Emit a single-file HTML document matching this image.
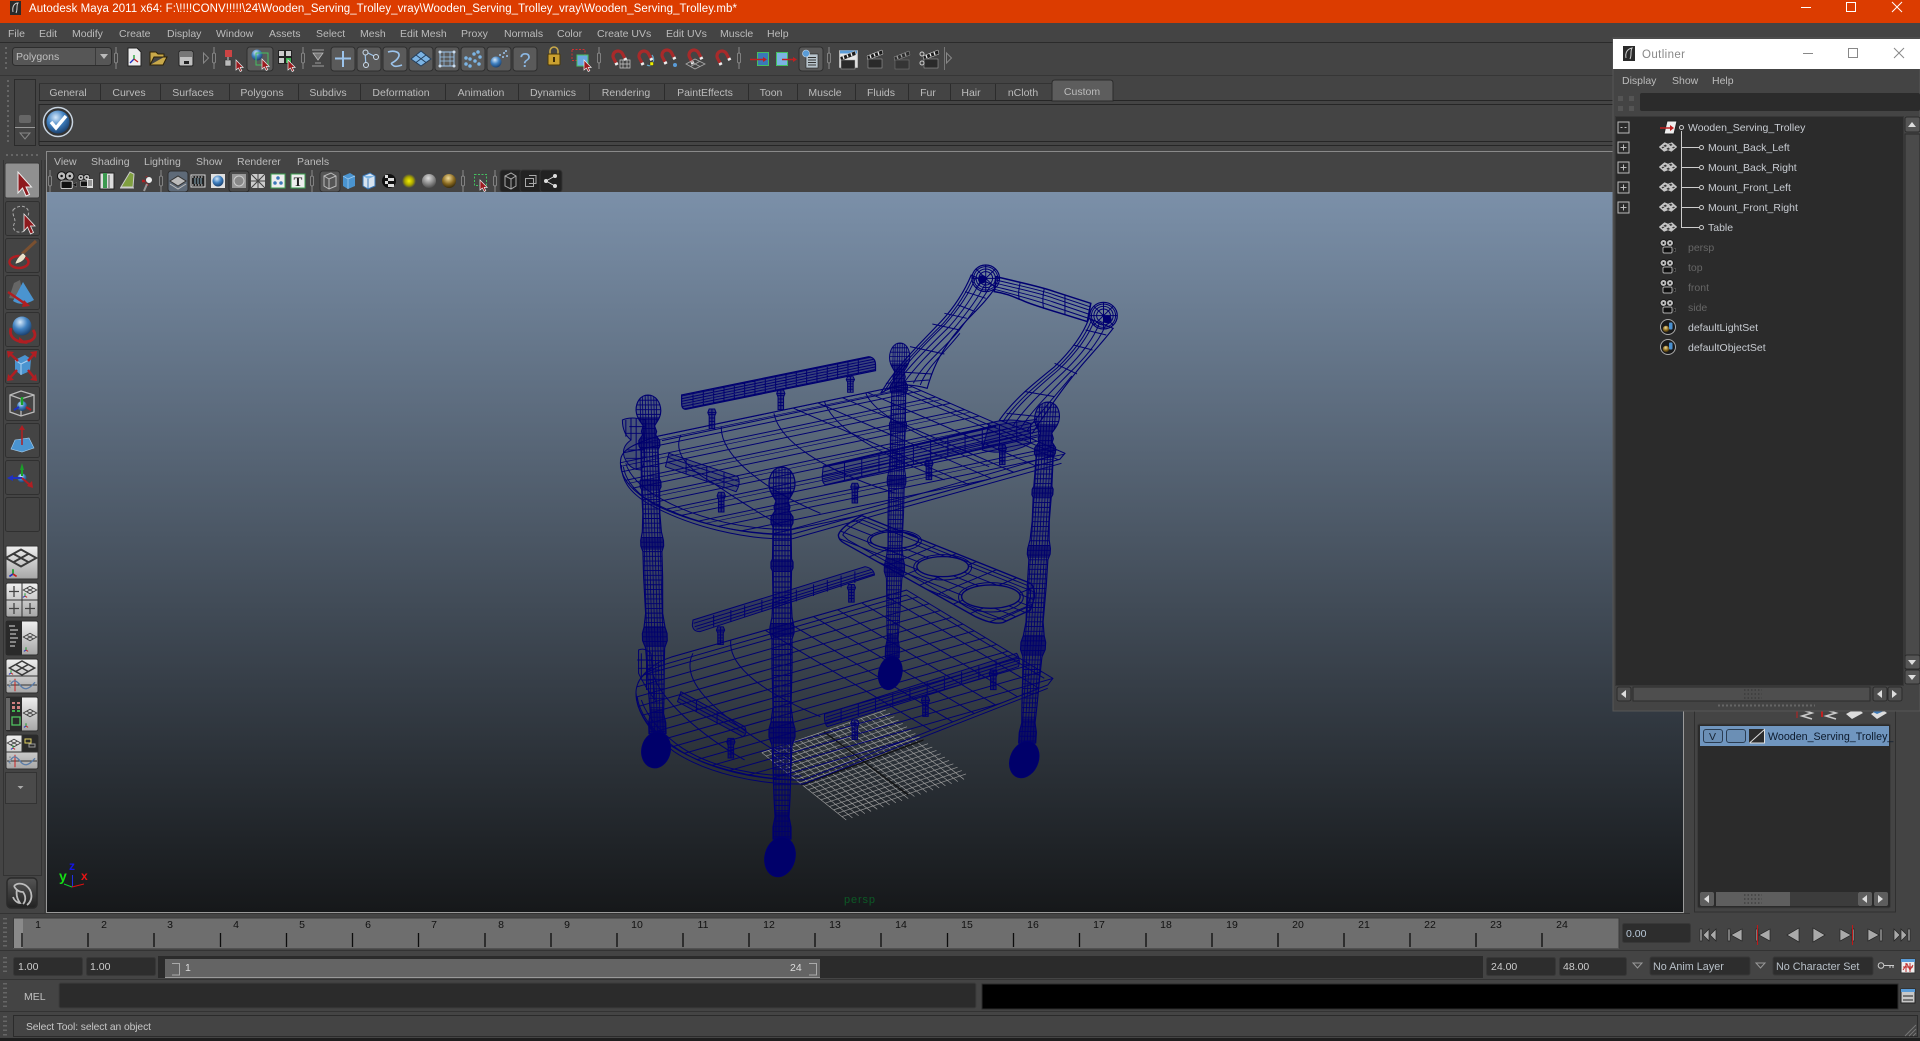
<!DOCTYPE html>
<html><head><meta charset="utf-8"><title>Autodesk Maya 2011</title>
<style>
html,body{margin:0;padding:0;background:#444;overflow:hidden}
svg{display:block}
text{font-family:"Liberation Sans",sans-serif;font-size:10.5px;fill:#bcbcbc}
</style></head><body>
<svg xmlns="http://www.w3.org/2000/svg" width="1920" height="1041" viewBox="0 0 1920 1041">
<defs>
<linearGradient id="vp" x1="0" y1="0" x2="0" y2="1"><stop offset="0" stop-color="#7b90a9"/><stop offset="1" stop-color="#16181a"/></linearGradient>
<linearGradient id="lt" x1="0" y1="0" x2="0" y2="1"><stop offset="0" stop-color="#efefef"/><stop offset="1" stop-color="#a6a6a6"/></linearGradient>
<linearGradient id="dk" x1="0" y1="0" x2="0" y2="1"><stop offset="0" stop-color="#555"/><stop offset="1" stop-color="#222"/></linearGradient>
<radialGradient id="gb" cx=".4" cy=".3" r=".75"><stop offset="0" stop-color="#d5e8fa"/><stop offset=".5" stop-color="#3f80c0"/><stop offset="1" stop-color="#173a66"/></radialGradient>
<radialGradient id="gy" cx=".5" cy=".5" r=".5"><stop offset="0" stop-color="#f4f000"/><stop offset=".6" stop-color="#a8a400"/><stop offset="1" stop-color="#444"/></radialGradient>
<radialGradient id="gg" cx=".45" cy=".3" r=".75"><stop offset="0" stop-color="#ddd"/><stop offset="1" stop-color="#444"/></radialGradient>
<radialGradient id="go" cx=".45" cy=".3" r=".75"><stop offset="0" stop-color="#f2dc9a"/><stop offset=".55" stop-color="#8a6a20"/><stop offset="1" stop-color="#2a2008"/></radialGradient>
<g id="h"><path d="M0-11V11" stroke="#8a8a8a"/><rect x="-1.5" y="-5" width="3" height="10" rx="1.5" fill="#444" stroke="#9a9a9a" stroke-width=".7"/></g>
<rect id="b" x="-12" y="-12" width="24" height="24" rx="3" fill="#5a5a5a" stroke="#2e2e2e"/>
<rect id="bd" x="-11" y="-11" width="22" height="22" rx="3" fill="#222" stroke="#333"/>
<path id="cur" d="M0 0V10L2.4 8 4.2 11.5 5.8 10.7 4.2 7.4H7.2Z" fill="#9c1a1e" stroke="#eee" stroke-width=".7"/>
<g id="mag"><path d="M-5 5V0A5 5 0 0 1 5 0V5" transform="rotate(-28)" fill="none" stroke="#a82a2a" stroke-width="3.200"/><path d="M-5 5V7.500M5 5V7.500" transform="rotate(-28)" stroke="#eee" stroke-width="3.200"/></g>
<g id="cam"><circle cx="-3.5" cy="-4" r="3.4" fill="#bbb" stroke="#111" stroke-width=".8"/><circle cx="3" cy="-4" r="3.4" fill="#bbb" stroke="#111" stroke-width=".8"/><circle cx="-3.5" cy="-4" r="1" fill="#111"/><circle cx="3" cy="-4" r="1" fill="#111"/><rect x="-4" y="0" width="9" height="6" rx="1" fill="#111" stroke="#ddd" stroke-width=".7"/><path d="M5 3l3.5-1.8v3.6z" fill="#111" stroke="#888" stroke-width=".4"/></g>
<g id="clap"><path d="M-8-1L7-7 8-3-7 3z" fill="#1c1c1c" stroke="#ddd" stroke-width=".5"/><path d="M-5-2l1 3M-1-3.600l1 3M3-5l1 3" stroke="#eee" stroke-width="1.300"/><rect x="-7" y="2" width="14" height="9" fill="#2a2a2a" stroke="#aaa" stroke-width=".5"/></g>
<g id="pl"><path d="M-9 0L0-5 9 0 0 5ZM-4.500-2.500L4.500 2.500M4.500-2.500L-4.500 2.500" fill="none" stroke="#3a3a3a" stroke-width="1.100"/></g>
<g id="ax"><path d="M0 0V-4" stroke="#1a9a2a" stroke-width="1.400"/><path d="M0 0L-3 2" stroke="#2030c0" stroke-width="1.400"/><path d="M0 0L3 2" stroke="#c02020" stroke-width="1.400"/></g>
<g id="wv"><path d="M-15 0H15" stroke="#333"/><path d="M-7-7V7" stroke="#c22"/><path d="M-13 2C-9-7-6-6-2 0S6 6 13-3" fill="none" stroke="#5a7ca8" stroke-width="1.400"/><path d="M-12-5V5" stroke="#999" stroke-width="2" stroke-dasharray="1.500 2"/></g>
<g id="msh"><path d="M-9.500 0L-3.500-5 0-3.500 4-5 9.500 0 3.500 5 0 3.500-4 5Z" fill="#c4c4c4" stroke="#222" stroke-width=".5"/><path d="M-4.500-1.500L-2.500-2.500-1-1-3 0ZM1-2.500L3-3.500 4.500-2 2.500-1ZM-1.500 1.500L.5.5 2 2 0 3ZM4 .5L6-.5 7 .5 5 1.500ZM-6.500.5L-5-.5-3.500.5-5.500 1.500Z" fill="#3c3c3c"/></g>
<g id="st"><circle r="7.500" fill="#1a1a1a" stroke="#aaa"/><circle cx="-2" cy="2" r="3.200" fill="url(#go)"/><rect x="1" y="-4.500" width="3.500" height="7" rx="1" fill="#4a90d0"/></g>
<g id="pb"><rect x="-5.500" y="-5.500" width="11" height="11" fill="none" stroke="#bbb"/><path d="M-3 0H3M0-3V3" stroke="#bbb"/></g>
<g id="pst"><path d="M-8-35H8L12-24 8-14V24H-8V-14L-12-24Z" fill="#00006e" fill-opacity=".45" stroke="#000070" stroke-width="3"/><path d="M-12-24H12M-10-18H10M-8-8H8M-8 2H8M-8 12H8M0-35V24" stroke="#000070" stroke-width="3"/></g>
<path id="lp" d="M0 0C8 0 13 8 13 17 13 25 8 30 6 34L8 40 7 44 11 50 11 56 9 60 9.500 92 11 95 11 101 9.500 104 9 130 10 150 12 160 12 166 10 172 10 200 9 240 11 255 13 262 13 270 10 278 9 300 8 330 7 350 9 360 9 372H-9V360L-7 350-8 330-9 300-10 278-13 270-13 262-11 255-9 240-10 200-10 172-12 166-12 160-10 150-9 130-9.500 104-11 101-11 95-9.500 92-9 60-11 56-11 50-7 44-8 40-6 34C-8 30-13 25-13 17-13 8-8 0 0 0Z"/>
<clipPath id="lc"><use href="#lp"/></clipPath>
<g id="leg">
<use href="#lp" fill="#00006e" fill-opacity=".2" stroke="#000070" stroke-width="1.200"/>
<g clip-path="url(#lc)">
<path d="M0 0V372" stroke="#000070" stroke-width="30" stroke-dasharray="1 4.200" fill="none"/>
<path d="M-8.500 0V372M-6 0V372M-3 0V372M0 0V372M3 0V372M6 0V372M8.500 0V372" stroke="#000070" stroke-width=".9" fill="none"/>
<path d="M-14 24H14V60H-14ZM-14 92H14V104H-14ZM-14 156H14V170H-14ZM-14 254H14V276H-14ZM-14 345H14V372H-14Z" fill="#00006a" fill-opacity=".6"/>
</g>
<ellipse cx="-2" cy="390" rx="15" ry="20" transform="rotate(14 -2 390)" fill="#00006a" stroke="#000070"/>
</g>
<clipPath id="c1"><path d="M170 558L890 403 1350 610 1335 628 890 757 560 852C430 860 260 820 130 745 80 710 55 670 60 630 62 600 100 580 170 558Z"/></clipPath>
<clipPath id="c2" clip-rule="evenodd"><path clip-rule="evenodd" d="M692 855Q700 830 760 797L1250 1000Q1262 1010 1262 1040L1250 1080 1170 1118Q1140 1125 1090 1100L710 880Q692 870 692 855ZM785 870A70 25 0 1 0 925 870 70 25 0 1 0 785 870ZM920 950A75 30 0 1 0 1070 950 75 30 0 1 0 920 950ZM1050 1040A85 35 0 1 0 1220 1040 85 35 0 1 0 1050 1040Z"/></clipPath>
<clipPath id="c3"><path d="M210 290L890 90 1315 355 1300 375 590 660C450 660 300 620 210 560 130 500 100 440 105 390 110 350 150 310 210 290Z"/></clipPath>
<clipPath id="r1"><path d="M237 435L780 320Q800 322 800 345V362L250 478Q237 478 237 460Z"/></clipPath>
<clipPath id="r2"><path d="M648 650L1150 525 1268 508 1275 560 1140 590 655 705Q645 700 645 680Z"/></clipPath>
</defs>

<rect width="1920" height="1041" fill="#444"/>

<!-- title bar -->
<rect width="1920" height="23" fill="#dc3c00"/>
<rect x="10" y="1" width="11" height="14" fill="#2a2a2a"/><path d="M13 12C12 7 14 3 18 3 16 6 18 9 16 13" fill="none" stroke="#ccc"/>
<text x="29" y="12" textLength="708" lengthAdjust="spacing" style="font-size:11.500px;fill:#fff">Autodesk Maya 2011 x64: F:\!!!!CONV!!!!!\24\Wooden_Serving_Trolley_vray\Wooden_Serving_Trolley_vray\Wooden_Serving_Trolley.mb*</text>
<path d="M1801 7.500H1811" stroke="#fff"/><rect x="1846.500" y="2.500" width="9" height="9" fill="none" stroke="#fff"/><path d="M1892 2L1902 12M1902 2L1892 12" stroke="#fff"/>

<!-- menu bar -->
<g>
<text x="8" y="37">File</text><text x="39" y="37">Edit</text><text x="72" y="37">Modify</text><text x="119" y="37">Create</text><text x="167" y="37">Display</text><text x="216" y="37">Window</text><text x="269" y="37">Assets</text><text x="316" y="37">Select</text><text x="360" y="37">Mesh</text><text x="400" y="37">Edit Mesh</text><text x="461" y="37">Proxy</text><text x="504" y="37">Normals</text><text x="557" y="37">Color</text><text x="597" y="37">Create UVs</text><text x="666" y="37">Edit UVs</text><text x="720" y="37">Muscle</text><text x="767" y="37">Help</text>
</g>
<path d="M0 42.500H1920" stroke="#2b2b2b"/><path d="M0 75.500H1920" stroke="#363636"/>

<!-- status line toolbar -->
<path d="M6 47V70" stroke="#666" stroke-width="2" stroke-dasharray="2 3"/>
<rect x="12.500" y="47.500" width="99" height="18" rx="3" fill="#565656" stroke="#2d2d2d"/><path d="M95.500 48V65" stroke="#3a3a3a"/><path d="M100 54H108L104 59Z" fill="#bbb"/>
<text x="16" y="60" style="fill:#c0c0c0">Polygons</text>
<use href="#h" x="116" y="58"/><use href="#h" x="214" y="58"/><use href="#h" x="303" y="58"/><use href="#h" x="599" y="58"/><use href="#h" x="739" y="58"/><use href="#h" x="829" y="58"/>
<path d="M128 48h9l4 4v14h-13z" fill="#eee" stroke="#222"/><path d="M134 59V55" stroke="#1a9a2a" stroke-width="1.300"/><path d="M134 59L130 63" stroke="#2030c0" stroke-width="1.300"/><path d="M134 59L138 62" stroke="#c02020" stroke-width="1.300"/>
<path d="M150 65V52h6l2 2h6v3H154l-4 8h13l4-8h-3" fill="#c9a94a" stroke="#2a2008"/>
<rect x="179" y="51" width="14" height="15" rx="1.500" fill="#c0c0c0" stroke="#222"/><rect x="180" y="52" width="12" height="5" fill="#777"/><rect x="184" y="61" width="5" height="3" fill="#222"/>
<path d="M203.500 53L208.500 58 203.500 63Z" fill="none" stroke="#888"/>
<rect x="225" y="50" width="7" height="7" fill="#c44"/><rect x="225" y="60" width="6" height="6" fill="#bbb" stroke="#222" stroke-width=".5"/><path d="M228 57V60" stroke="#ccc"/><use href="#cur" x="236" y="60"/>
<rect x="247" y="47" width="26" height="24" rx="3" fill="#5a5a5a" stroke="#2e2e2e"/><circle cx="257" cy="55" r="5.500" fill="url(#gb)"/><rect x="256" y="53" width="12" height="12" fill="none" stroke="#44c060"/><use href="#cur" x="262" y="59"/>
<rect x="278.500" y="50.500" width="6" height="6" fill="#ccc" stroke="#222"/><rect x="285.500" y="50.500" width="6" height="6" fill="#ccc" stroke="#222"/><rect x="278.500" y="57.500" width="6" height="6" fill="#ccc" stroke="#222"/><rect x="285.500" y="57.500" width="6" height="6" fill="#3cb050" stroke="#222"/><use href="#cur" x="288" y="60"/>
<path d="M312 50H324M312 66H324M313 53H323L318 60ZM315 63H321" fill="#777" stroke="#bbb" stroke-width=".8"/>
<use href="#b" x="343" y="59"/><use href="#b" x="369" y="59"/><use href="#b" x="395" y="59"/><use href="#b" x="421" y="59"/><use href="#b" x="447" y="59"/><use href="#b" x="473" y="59"/><use href="#b" x="499" y="59"/><use href="#b" x="525" y="59"/>
<path d="M343 51V67M335 58.500H351" stroke="#9cc4ec" stroke-width="2"/>
<path d="M365 52L366 66M366 52L376 57" stroke="#9cc4ec" stroke-width="1.200"/><circle cx="365.500" cy="52.500" r="2.500" fill="#5a5a5a" stroke="#cde"/><circle cx="366" cy="65" r="2.500" fill="#5a5a5a" stroke="#cde"/><circle cx="376" cy="57" r="2.500" fill="#5a5a5a" stroke="#cde"/>
<path d="M388 52C394 50 402 52 398 58S388 62 394 66C396 67 399 66 402 65" fill="none" stroke="#9cc4ec" stroke-width="1.600"/>
<path d="M411 59L421 51 431 59 421 66Z" fill="#7cb4e4" stroke="#26405c"/><path d="M416 55L426 62.500M426 55L416 62.500" stroke="#26405c"/>
<rect x="440" y="52" width="14" height="14" fill="none" stroke="#9cc4ec"/><path d="M444 52V66M450 52V66M440 57H454M440 61H454" stroke="#9cc4ec" stroke-width=".7"/><path d="M440 52h.01M454 52h.01M440 66h.01M454 66h.01" stroke="#cde" stroke-width="3" stroke-linecap="round"/>
<path d="M466 64h.01M470 59h.01M474 54h.01M478 52h.01M470 66h.01M475 61h.01M480 57h.01M479 64h.01M466 58h.01" stroke="#7cb4e4" stroke-width="3.500" stroke-linecap="round"/>
<circle cx="496" cy="62" r="5.500" fill="url(#gb)"/><path d="M500 55h.01M504 53h.01M503 57h.01M507 56h.01M506 51h.01" stroke="#9cc4ec" stroke-width="2" stroke-linecap="round"/>
<text x="525" y="67" text-anchor="middle" style="font-size:20px;fill:#8cb8e4">?</text>
<path d="M550 54V51A4 4 0 0 1 558 51V54" fill="none" stroke="#c9a94a" stroke-width="1.600"/><rect x="548" y="54" width="12" height="11" rx="1" fill="#c9a030" stroke="#4a3808"/><rect x="553" y="57" width="2" height="5" fill="#3a2a08"/>
<rect x="572" y="49.500" width="13" height="11" fill="none" stroke="#d03030" stroke-dasharray="2 1.500"/><rect x="577" y="55" width="11" height="11" fill="#6aa8e0" stroke="#44c060"/><use href="#cur" x="584" y="60"/>
<use href="#mag" x="618" y="56"/><path d="M620 60h10v8h-10zM623 60v8M627 60v8M620 64h10" fill="none" stroke="#ccc" stroke-width=".7"/>
<use href="#mag" x="644" y="56"/><path d="M647 65C652 68 656 60 652 55" fill="none" stroke="#6ac" stroke-width="1.200"/><rect x="650" y="62" width="3.500" height="3.500" fill="#ee0" stroke="#222" stroke-width=".4"/>
<use href="#mag" x="667" y="55"/><circle cx="675" cy="65" r="2" fill="#5a9cd8"/>
<use href="#mag" x="694" y="55"/><path d="M686 64L695 59 705 64 695 69ZM690.500 61.500L700 66.500M699.500 61.500L690.500 66.500" fill="none" stroke="#aaa" stroke-width=".8"/>
<use href="#mag" x="722" y="56"/>
<rect x="757.500" y="52.500" width="11" height="13" fill="#3a78b8" stroke="#44c060"/><path d="M750 59.500H763" stroke="#c02020" stroke-width="1.500"/><path d="M763 57V62L767 59.500Z" fill="#c02020"/>
<rect x="776.500" y="52.500" width="11" height="13" fill="#7cb4e4" stroke="#44c060"/><path d="M782 59.500H793" stroke="#c02020" stroke-width="1.500"/><path d="M793 57V62L797 59.500Z" fill="#c02020"/>
<rect x="799" y="47" width="24" height="24" rx="3" fill="#5a5a5a" stroke="#2e2e2e"/><rect x="806" y="54" width="12" height="14" fill="#b8c4cc" stroke="#222" stroke-width=".6"/><path d="M808 57.500H816M808 60H816M808 62.500H816M808 65H816" stroke="#333"/><circle cx="806" cy="53.500" r="3.500" fill="#5a9cd8" stroke="#cde" stroke-width=".6"/>
<rect x="840" y="51" width="17" height="16" fill="#e8e8e8" stroke="#ddd" stroke-width="1.500"/><rect x="840" y="50.500" width="17" height="3" fill="#5a9cd8"/><use href="#clap" x="848" y="58"/>
<use href="#clap" x="875" y="57"/>
<g opacity=".55"><use href="#clap" x="902" y="58"/></g>
<use href="#clap" x="931" y="57"/><circle cx="922" cy="54" r="2" fill="none" stroke="#ccc"/><circle cx="922" cy="63" r="2" fill="none" stroke="#ccc"/>
<path d="M946.500 53L951.500 58 946.500 63Z" fill="none" stroke="#888"/><path d="M944.500 47V70" stroke="#777"/>

<!-- shelf -->
<path d="M8 80V145" stroke="#666" stroke-width="2" stroke-dasharray="2 3"/>
<rect x="14.500" y="79.500" width="21" height="66" fill="#444" stroke="#2b2b2b"/><rect x="19" y="115" width="12" height="8" rx="2" fill="#666"/><path d="M15 127.500H35" stroke="#999"/><path d="M20 133H30L25 139Z" fill="none" stroke="#888"/>
<path d="M39 83.500H1052" stroke="#333"/>
<path d="M39.500 84V100M100.500 84V100M160.500 84V100M229.500 84V100M298.500 84V100M360.500 84V100M445.500 84V100M518.500 84V100M589.500 84V100M664.500 84V100M748.500 84V100M797.500 84V100M855.500 84V100M908.500 84V100M950.500 84V100M995.500 84V100" stroke="#2c2c2c"/>
<path d="M1052 101V83Q1052 80 1055 80H1110Q1113 80 1113 83V101Z" fill="#5d5d5d" stroke="#2c2c2c"/>
<g text-anchor="middle" style="font-size:10.700px">
<text x="68" y="96">General</text><text x="129" y="96">Curves</text><text x="193" y="96">Surfaces</text><text x="262" y="96">Polygons</text><text x="328" y="96">Subdivs</text><text x="401" y="96">Deformation</text><text x="481" y="96">Animation</text><text x="553" y="96">Dynamics</text><text x="626" y="96">Rendering</text><text x="705" y="96">PaintEffects</text><text x="771" y="96">Toon</text><text x="825" y="96">Muscle</text><text x="881" y="96">Fluids</text><text x="928" y="96">Fur</text><text x="971" y="96">Hair</text><text x="1023" y="96">nCloth</text><text x="1082" y="95">Custom</text>
</g>
<path d="M39 100.500H1052M1113 100.500H1920M39 104.500H1920M39 141.500H1920M39 145.500H1920" stroke="#262626"/><path d="M39 104V145" stroke="#262626"/>
<circle cx="58" cy="122" r="14.500" fill="#333" stroke="#c8d4e0" stroke-width="1.500"/><circle cx="58" cy="122" r="11.500" fill="url(#gb)"/><path d="M51 122L56 128 66 116" fill="none" stroke="#fff" stroke-width="3.400"/>

<!-- left toolbox -->
<path d="M6 155H38" stroke="#666" stroke-width="2" stroke-dasharray="2 3"/>
<path d="M3.500 160V875.500H41.500V160M45 160V913" fill="none" stroke="#333"/>
<g fill="#444" stroke="#303030">
<rect x="5.500" y="201.500" width="34" height="34" rx="2"/><rect x="5.500" y="238.500" width="34" height="34" rx="2"/><rect x="5.500" y="275.500" width="34" height="34" rx="2"/><rect x="5.500" y="312.500" width="34" height="34" rx="2"/><rect x="5.500" y="349.500" width="34" height="34" rx="2"/><rect x="5.500" y="386.500" width="34" height="34" rx="2"/><rect x="5.500" y="423.500" width="34" height="34" rx="2"/><rect x="5.500" y="460.500" width="34" height="34" rx="2"/><rect x="5.500" y="497.500" width="34" height="34" rx="2"/>
</g>
<rect x="5" y="163" width="34.500" height="35" rx="2" fill="#909090" stroke="#3a3a3a"/>
<path d="M18 172V193L22.500 188 26 196 29.500 194.500 26 187H31.500Z" fill="#8e1a1e" stroke="#eee" stroke-width="1"/>
<path d="M13 210C18 205 25 205 28 210 30 215 27 217 25 218 26 224 27 230 22 232 16 233 12 230 14 224 17 220 12 216 13 210Z" fill="none" stroke="#aaa" stroke-dasharray="3 2"/><path d="M24 214V231L27.500 227 30.500 234 33.500 232.500 30.500 226H35Z" fill="#8e1a1e" stroke="#eee" stroke-width=".8"/>
<ellipse cx="19" cy="262" rx="9.500" ry="6" fill="none" stroke="#b01e22" stroke-width="2.500"/><path d="M36 241L22 254" stroke="#7a5030" stroke-width="3"/><path d="M23 253C19 256 16 260 15 264 20 263 24 261 26 256Z" fill="#e8e0c8" stroke="#333" stroke-width=".5"/><path d="M13 255h.01M13 264h.01M19 267h.01M23 264h.01" stroke="#ee0" stroke-width="3"/>
<path d="M9 298L14 283 20 280 24 300Z" fill="#666"/><path d="M23 282L13 301Q22 307 34 300Z" fill="#4a94d0"/><path d="M8 292L27 305" stroke="#b01e22" stroke-width="2.500"/><path d="M24 300L30 306 22 307Z" fill="#b01e22"/>
<circle cx="22" cy="326" r="9.500" fill="url(#gb)"/><path d="M11 328C8 338 18 344 30 341 36 338 36 334 33 330" fill="none" stroke="#b01e22" stroke-width="2.800"/><path d="M19 337L28 344 19 343Z" fill="#b01e22"/>
<path d="M15 360L25 355 31 359 30 371 21 375 15 370Z" fill="#4a94d0"/><path d="M15 360L21 364 31 359M21 364V375" stroke="#a8d0f0" fill="none"/><path d="M8 352L18 361M36 352L28 361M8 380L17 370M36 380L28 370" stroke="#b01e22" stroke-width="2.500"/><path d="M7 351L14 352 8 358ZM37 351L30 352 36 358ZM7 381L14 380 8 374ZM37 381L30 380 36 374Z" fill="#b01e22"/>
<path d="M10 395L21 391 34 395V412L21 416 10 412ZM10 395L21 399 34 395M21 399V416" fill="none" stroke="#bbb" stroke-width="1.300"/><circle cx="22" cy="406" r="5" fill="url(#gb)"/><path d="M22 397V405" stroke="#1aa02a" stroke-width="2.500"/><path d="M14 410L19 407" stroke="#2030c0" stroke-width="2"/><path d="M31 410L26 407" stroke="#b01e22" stroke-width="2"/><path d="M10 395h.01M21 391h.01M34 395h.01M10 412h.01M21 416h.01M34 412h.01" stroke="#ee0" stroke-width="2.500"/>
<path d="M11 449L15 440 29 438 34 448 22 452Z" fill="#4a94d0" stroke="#a8d0f0" stroke-width=".6"/><path d="M22 445V428" stroke="#b01e22" stroke-width="1.500"/><path d="M19 430L22 425 25 430Z" fill="#b01e22"/><path d="M18 443h.01M22 437h.01M27 443h.01" stroke="#ee0" stroke-width="3"/>
<circle cx="22" cy="478" r="4.500" fill="url(#gb)"/><path d="M22 476V468" stroke="#1aa02a" stroke-width="2"/><path d="M20 470L22 463 24 470Z" fill="#1aa02a"/><path d="M22 478H12" stroke="#2030c0" stroke-width="2"/><path d="M13 475L7 478 13 481Z" fill="#2030c0"/><path d="M22 478L30 485" stroke="#b01e22" stroke-width="2"/><path d="M27 486L33 488 32 481Z" fill="#b01e22"/>

<rect x="6" y="546" width="32" height="33" rx="1" fill="url(#lt)" stroke="#333"/><use href="#pl" transform="translate(21 558) scale(1.700)"/><use href="#ax" transform="translate(13 574) scale(1.200)"/>
<rect x="6" y="583" width="32" height="34" rx="2" fill="url(#lt)" stroke="#2e2e2e"/><path d="M22 583V617M6 600H38" stroke="#333"/><path d="M9 591.500H19M14 586V597M9 608.500H19M14 603V614M25 608.500H35M30 603V614" stroke="#444" stroke-width="1.300"/><use href="#pl" transform="translate(30 590) scale(.75)"/><use href="#ax" transform="translate(25 596) scale(.7)"/>
<rect x="6" y="621" width="32" height="34" rx="2" fill="url(#lt)" stroke="#2e2e2e"/><rect x="6" y="621" width="16" height="34" fill="#2a2a2a"/><path d="M9 626H15M10 630H18M10 634H16M10 638H18M10 642H16M10 646H15" stroke="#ddd"/><use href="#pl" transform="translate(30 637) scale(.75)"/><use href="#ax" transform="translate(26 650) scale(.7)"/>
<rect x="6" y="659" width="32" height="34" rx="2" fill="url(#lt)" stroke="#2e2e2e"/><path d="M6 676H38" stroke="#333"/><use href="#pl" transform="translate(22 668) scale(1.400)"/><use href="#ax" transform="translate(11 673) scale(.7)"/><use href="#wv" transform="translate(22 685) scale(1 .9)"/>
<rect x="6" y="697" width="32" height="34" rx="2" fill="url(#lt)" stroke="#2e2e2e"/><rect x="6" y="697" width="16" height="34" fill="#2a2a2a"/><rect x="6" y="698" width="4" height="32" fill="#666"/><path d="M12 702h3v2h-3zM17 702h3v2h-3zM12 706h3v3h-3zM17 706h3v3h-3z" fill="#d08080"/><path d="M12 710h3v2h-3zM17 710h3v2h-3z" fill="#40b050"/><rect x="12" y="717" width="8" height="8" fill="none" stroke="#50c060" stroke-width="1.300"/><use href="#pl" transform="translate(30 713) scale(.75)"/><use href="#ax" transform="translate(26 726) scale(.7)"/>
<rect x="6" y="735" width="32" height="34" rx="2" fill="url(#lt)" stroke="#2e2e2e"/><rect x="22" y="735" width="16" height="17" fill="#2a2a2a"/><path d="M6 752H38M22 735V752" stroke="#333"/><use href="#pl" transform="translate(14 743) scale(.75)"/><use href="#ax" transform="translate(13 748) scale(.7)"/><rect x="25" y="739" width="6" height="4" fill="none" stroke="#e0d060"/><rect x="29" y="744" width="6" height="3" fill="none" stroke="#999"/><use href="#wv" transform="translate(22 761) scale(1 .9)"/>
<rect x="5.500" y="772.500" width="31" height="31" fill="#4a4a4a" stroke="#333"/><path d="M17.500 786H23.500L20.500 789Z" fill="#aaa"/>
<rect x="7" y="878" width="30" height="30" rx="4" fill="url(#dk)" stroke="#2a2a2a" stroke-width="1.500"/>
<path d="M14 886C18 882 26 883 30 890 33 896 31 902 27 905M14 886C16 890 19 892 23 892 26 896 26 901 23 904M17 889C16 894 17 899 20 903 17 903 14 900 13 897" fill="none" stroke="#bcbcbc" stroke-width="1.800"/>

<!-- panel -->
<path d="M46 151.500H1920" stroke="#8a8a8a"/><path d="M46.500 151V913" stroke="#8a8a8a"/>
<g><text x="54" y="165">View</text><text x="91" y="165">Shading</text><text x="144" y="165">Lighting</text><text x="196" y="165">Show</text><text x="237" y="165">Renderer</text><text x="297" y="165">Panels</text></g>
<use href="#h" x="50" y="181"/><use href="#h" x="161" y="181"/><use href="#h" x="312" y="181"/><use href="#h" x="463" y="181"/><use href="#h" x="495" y="181"/>
<use href="#cam" transform="translate(66 181) scale(1.250)"/><use href="#cam" transform="translate(84 181) scale(.9)"/><path d="M87 179h6v9h-6z" fill="#ddd"/><path d="M88 181h4M88 183h4M88 185h4" stroke="#222" stroke-width=".7"/>
<rect x="100" y="173" width="14" height="16" fill="#ddd" stroke="#222"/><rect x="103" y="173" width="4" height="15" fill="#3c9a50"/><rect x="108" y="175" width="2" height="13" fill="#999"/>
<path d="M121 187L130 172 134 174 133 187Z" fill="#80a040" stroke="#ccc"/><path d="M120 188H134" stroke="#ccc"/>
<path d="M147 176V186M142 181H152" stroke="#b01e22" stroke-width="2.500"/><circle cx="149" cy="180" r="3.500" fill="#eee" stroke="#444"/><path d="M144 191L147 184" stroke="#999" stroke-width="2"/>
<rect x="168" y="171" width="20" height="21" rx="3" fill="#5e6a78" stroke="#2e2e2e"/><path d="M170 181L178 176 186 181 178 186Z" fill="#bbb" stroke="#333"/><path d="M170 184L178 189 186 184" fill="none" stroke="#bbb"/>
<rect x="191" y="175" width="14" height="12" fill="#222" stroke="#ddd"/><path d="M192 177H204M192 185H204" stroke="#eee" stroke-dasharray="1.500 1.500"/><path d="M195 178V184M198 178V184M201 178V184" stroke="#8ab"/>
<rect x="211" y="174" width="14" height="14" fill="#e0e0e0"/><circle cx="218" cy="181" r="5.500" fill="url(#gb)"/>
<rect x="229" y="171" width="20" height="21" rx="3" fill="#4a4a4a" stroke="#2a2a2a"/><rect x="232" y="174" width="14" height="14" fill="#999"/><circle cx="239" cy="181" r="5" fill="#888" stroke="#ccc"/>
<rect x="251" y="174" width="14" height="14" fill="#ccc"/><path d="M251 174L265 188M265 174L251 188M258 174V188M251 181H265" stroke="#444"/>
<rect x="271" y="174" width="14" height="14" fill="#eee" stroke="#3ca050"/><path d="M275 183h.01M278 178h.01M281 183h.01" stroke="#3a78b8" stroke-width="3.500" stroke-linecap="round"/>
<rect x="291" y="174" width="14" height="14" fill="#eee" stroke="#3ca050"/><text x="298" y="186" text-anchor="middle" style="font-family:'Liberation Serif',serif;font-size:13px;font-weight:bold;fill:#222">T</text>
<rect x="320" y="171" width="20" height="21" rx="3" fill="#555" stroke="#2e2e2e"/><path d="M324 176L331 173 336 176V186L329 189 324 186ZM324 176L329 179 336 176M329 179V189" fill="none" stroke="#bbb"/>
<path d="M343 176L350 173 355 176V186L348 189 343 186Z" fill="#4a94d0"/><path d="M343 176L348 179 355 176M348 179V189" fill="none" stroke="#a8d0f0" stroke-width=".7"/>
<path d="M363 176L370 173 375 176V186L368 189 363 186Z" fill="#d8e4f0" stroke="#3a78b8"/><path d="M368 179V189" stroke="#3a78b8"/><path d="M363 176L368 179 375 176" fill="#7cb4e4"/>
<circle cx="389" cy="181" r="7" fill="#111"/><path d="M385 175h3v3h-3zM391 178h3v3h-3zM385 181h3v3h-3zM391 184h3v3h-3zM388 178h3v3h-3zM388 184h3v3h-3z" fill="#ddd"/>
<circle cx="409" cy="181" r="7" fill="url(#gy)"/><circle cx="429" cy="181" r="7" fill="url(#gg)"/><circle cx="449" cy="181" r="7" fill="url(#go)"/>
<rect x="474.500" y="174.500" width="12" height="11" fill="none" stroke="#44c060" stroke-dasharray="2 1.500"/><use href="#cur" x="480" y="180"/>
<use href="#bd" x="511" y="181"/><path d="M505 176L511 173 516 176V186L511 189 505 186ZM505 176L511 179 516 176M511 179V189" fill="none" stroke="#aaa"/>
<use href="#bd" x="531" y="181"/><path d="M525.500 178.500h8v8h-8zM529 175.500h7v8h-7" fill="none" stroke="#aaa"/>
<use href="#bd" x="551" y="181"/><circle cx="546" cy="181" r="2" fill="#ddd"/><circle cx="555" cy="176" r="2" fill="#ddd"/><circle cx="555" cy="186" r="2" fill="#ddd"/><path d="M546 181L555 176M546 181L555 186" stroke="#ddd"/>

<!-- viewport -->
<rect x="47" y="192" width="1636" height="720" fill="url(#vp)"/>
<path d="M46.500 192V912.500H1683.500V192" fill="none" stroke="#9a9a9a"/>

<!-- trolley -->
<g transform="translate(600 560) scale(.3444 .3333)" fill="none" stroke="#000070" stroke-width="2.900">
<!-- ground grid -->
<path stroke="#9a9a9a" stroke-width="2" d="M470 578l360-128m-347.750 138.100l360-128m-347.750 138.100l360-128m-347.750 138.100l360-128m-347.750 138.100l360-128m-347.750 138.100l360-128m-347.750 138.100l360-128m-347.750 138.100l360-128m-347.750 138.100l360-128m-347.750 138.100l360-128m-347.750 138.100l360-128m-347.750 138.100l360-128m-347.750 138.100l360-128m-347.750 138.100l360-128m-347.750 138.100l360-128m-347.750 138.100l360-128m-347.750 138.100l360-128m-347.750 138.100l360-128m-347.750 138.100l360-128m-347.750 138.100l360-128"/>
<path stroke="#9a9a9a" stroke-width="2" d="M470 578l245 202m-227-208.400l245 202m-227-208.400l245 202m-227-208.400l245 202m-227-208.400l245 202m-227-208.400l245 202m-227-208.400l245 202m-227-208.400l245 202m-227-208.400l245 202m-227-208.400l245 202m-227-208.400l245 202m-227-208.400l245 202m-227-208.400l245 202m-227-208.400l245 202m-227-208.400l245 202m-227-208.400l245 202m-227-208.400l245 202m-227-208.400l245 202m-227-208.400l245 202m-227-208.400l245 202"/>
<path stroke="#111" stroke-width="4" d="M650 515L895 705M585 675L940 540"/>
<!-- lower tray -->
<g clip-path="url(#c3)">
<path d="M0 352l1500-441m-1500 471l1500-441m-1500 471l1500-441m-1500 471l1500-441m-1500 471l1500-441m-1500 471l1500-441m-1500 471l1500-441m-1500 471l1500-441m-1500 471l1500-441m-1500 471l1500-441m-1500 471l1500-441m-1500 471l1500-441m-1500 471l1500-441m-1500 471l1500-441m-1500 471l1500-441m-1500 471l1500-441m-1500 471l1500-441"/>
<path d="M480 211l650 405m-580-425.600l650 405m-580-425.600l650 405m-580-425.600l650 405m-580-425.600l650 405m-580-425.600l650 405m-580-425.600l650 405"/>
<path d="M380 240C370 320 480 400 640 470M270 280C240 340 290 410 380 480 440 530 500 570 560 600M150 330C170 420 300 530 420 600"/>
</g>
<path d="M210 290L890 90 1315 355 1300 375 590 660C450 660 300 620 210 560 130 500 100 440 105 390 110 350 150 310 210 290Z"/>
<path d="M105 400C105 450 140 515 215 575 310 640 460 675 590 672L1300 385M110 370C120 340 160 320 215 305L890 105 1290 355M120 420C140 480 190 530 240 565 330 625 460 650 585 648M108 410C115 465 160 525 230 570 320 630 460 662 590 660"/>
<!-- lower rails -->
<path d="M270 180L770 20Q795 25 797 45L290 215Q270 215 268 195Z" fill="#00006e" fill-opacity=".22"/>
<path d="M272 190L790 28M275 200L795 35M280 208L796 42M330 165V200M380 150V186M420 136V172M470 120V156M520 105V140M570 89V124M620 73V108M660 60V95M700 47V82M740 34V69"/>
<use href="#pst" transform="translate(350 232) scale(1 .9)"/><use href="#pst" transform="translate(730 105) scale(1 .9)"/>
<path d="M652 462L1210 280Q1222 300 1215 320L660 500Q650 490 652 462Z" fill="#00006e" fill-opacity=".22"/>
<path d="M655 472L1216 290M655 482L1218 300M657 492L1217 310M700 448V484M750 432V468M800 416V452M850 400V436M900 384V420M950 367V403M1000 351V387M1050 335V371M1100 319V355M1150 302V338"/>
<use href="#pst" transform="translate(740 515)"/><use href="#pst" transform="translate(945 445)"/><use href="#pst" transform="translate(1142 365)"/>
<path d="M235 395L420 500Q430 520 415 530L225 425Z" fill="#00006e" fill-opacity=".2"/>
<path d="M232 405L422 510M228 415L420 520M280 420V455M340 455V490"/><use href="#pst" transform="translate(380 570)"/>
<path d="M112 270Q130 262 148 280L160 420Q130 380 112 340Z"/><path d="M120 280V350M135 278V390M108 300L150 300M110 325L155 325M120 360L155 360"/>
</g>

<g transform="translate(600 250) scale(.3444 .3333)" fill="none" stroke="#000070" stroke-width="2.900">
<!-- bottle tray -->
<g clip-path="url(#c2)">
<path d="M600 731l700 287m-700-263l700 287m-700-263l700 287m-700-263l700 287m-700-263l700 287m-700-263l700 287m-700-263l700 287m-700-263l700 287m-700-263l700 287"/>
<path d="M690 960l280-120m-221 144l280-120m-221 144l280-120m-221 144l280-120m-221 144l280-120m-221 144l280-120m-221 144l280-120m-221 144l280-120m-221 144l280-120m-221 144l280-120m-221 144l280-120"/>
</g>
<path d="M692 855Q700 830 760 797L1250 1000Q1262 1010 1262 1040L1250 1080 1170 1118Q1140 1125 1090 1100L710 880Q692 870 692 855Z" stroke-width="4"/>
<path d="M705 855Q712 838 762 810L1240 1006Q1250 1015 1250 1040L1240 1072 1168 1106Q1140 1112 1095 1088L720 870Z"/>
<ellipse cx="855" cy="870" rx="70" ry="25" stroke-width="4"/><ellipse cx="855" cy="872" rx="78" ry="32"/><ellipse cx="995" cy="950" rx="75" ry="30" stroke-width="4"/><ellipse cx="995" cy="952" rx="84" ry="38"/><ellipse cx="1135" cy="1040" rx="85" ry="35" stroke-width="4"/><ellipse cx="1135" cy="1042" rx="94" ry="44"/>
<!-- top tray -->
<g clip-path="url(#c1)">
<path d="M0 595l1500-323m-1500 351l1500-323m-1500 351l1500-323m-1500 351l1500-323m-1500 351l1500-323m-1500 351l1500-323m-1500 351l1500-323m-1500 351l1500-323m-1500 351l1500-323m-1500 351l1500-323m-1500 351l1500-323m-1500 351l1500-323m-1500 351l1500-323m-1500 351l1500-323"/>
<path d="M0 606l1500-323m-1500 379l1500-323m-1500 379l1500-323m-1500 379l1500-323m-1500 379l1500-323m-1500 379l1500-323" stroke-width="2"/>
<path d="M560 474l600 270m-528-285.500l600 270m-528-285.500l600 270m-528-285.500l600 270m-528-285.500l600 270m-528-285.500l600 270"/>
<path d="M352 530C350 620 480 720 640 790M505 490C520 570 640 660 860 730M235 555C215 600 240 650 330 700 430 770 480 800 530 830M650 450C670 520 760 590 1000 690M770 425C790 480 860 530 1130 650"/>
</g>
<path d="M170 558L890 403 1350 610 1335 628 890 757 560 852C430 860 260 820 130 745 80 710 55 670 60 630 62 600 100 580 170 558Z" stroke-width="3.200"/>
<path d="M62 645C62 690 85 725 135 758 260 832 430 872 560 866L890 770 1340 640M75 640C85 680 130 720 180 748 290 810 430 840 555 838L885 745 1320 615M180 572L890 418 1320 610M68 650C75 700 120 740 160 765 280 825 430 855 558 852"/>
<!-- top rails -->
<path d="M237 435L780 320Q800 322 800 345V362L250 478Q237 478 237 460Z" fill="#00006e" fill-opacity=".42" stroke-width="3.500"/>
<g clip-path="url(#r1)"><path d="M200 446l650-138m-650 146l650-138m-650 146l650-138m-650 146l650-138m-650 146l650-138m-650 146l650-138m-650 146l650-138m-650 146l650-138m-650 146l650-138M270 420V490M300 420V490M330 410V480M360 405V475M390 398V468M420 392V462M450 385V455M480 378V448M510 372V442M540 365V435M570 358V428M600 352V422M630 345V415M660 338V408M690 332V402M720 325V395M750 318V388"/></g>
<use href="#pst" transform="translate(325 512)"/><use href="#pst" transform="translate(525 455)"/><use href="#pst" transform="translate(727 408) scale(1 .8)"/>
<path d="M648 650L1150 525 1268 508 1275 560 1140 590 655 705Q645 700 645 680Z" fill="#00006e" fill-opacity=".2"/>
<path d="M648 650L1150 528" stroke-width="6"/>
<g clip-path="url(#r2)"><path d="M640 668l640-155m-640 165l640-155m-640 165l640-155m-640 165l640-155m-640 165l640-155m-640 165l640-155M710 620V705M760 615V700M810 600V685M860 590V675M910 575V660M960 565V650M1010 550V635M1060 540V625M1110 525V610M1160 515V600M1210 505V590"/></g>
<use href="#pst" transform="translate(740 735)"/><use href="#pst" transform="translate(955 665)"/><use href="#pst" transform="translate(1168 620)"/>
<path d="M1130 520Q1190 500 1250 520L1250 580Q1180 620 1110 600Z" fill="#00006e" fill-opacity=".3"/>
<path d="M200 610L400 680Q410 700 395 725L190 650Z" fill="#00006e" fill-opacity=".2"/><path d="M198 622L405 695M194 636L400 710M250 628V672M310 650V695M360 668V715"/>
<use href="#pst" transform="translate(352 762)"/>
<!-- left curl -->
<path d="M65 510Q90 498 132 510L128 590Q135 630 120 660 85 660 70 620 62 590 90 570 65 550 65 510Z" fill="#00006e" fill-opacity=".2"/>
<path d="M75 510V560M90 505V570M105 505V660M85 530H130M72 550H130M80 600H130M75 625H125"/>
<!-- handle left arm -->
<path d="M815 430C860 350 920 290 990 215 1030 170 1060 120 1078 75L1150 110C1110 170 1080 190 1040 240 1000 290 970 340 950 415 900 400 860 400 815 430Z" stroke-width="3.400"/>
<path d="M825 425C870 350 928 290 997 220 1037 172 1066 125 1084 80M835 420C880 350 935 290 1003 222 1043 175 1072 130 1090 85M855 410C895 350 950 295 1016 228 1056 180 1085 135 1105 92M880 402C915 350 965 300 1028 235 1068 185 1100 142 1120 98M910 400C935 345 985 310 1040 245 1075 195 1110 152 1135 105M930 405C950 350 995 315 1045 250"/>
<path d="M900 290L1000 312M965 222L1045 240M1000 190L1065 205M1040 165L1090 185M1060 125L1120 145M855 365L965 372M830 400L955 390"/>
<!-- handle right arm -->
<path d="M1160 510C1200 450 1260 400 1320 350 1360 310 1400 260 1420 205L1490 235C1450 290 1400 340 1380 370 1340 420 1300 480 1255 550Z" stroke-width="3.400"/>
<path d="M1170 515C1208 455 1268 405 1327 354 1367 314 1408 264 1428 208M1178 520C1215 460 1275 410 1333 358 1373 318 1415 268 1435 212M1198 530C1235 470 1290 420 1346 366 1386 326 1430 275 1450 220M1218 540C1255 480 1305 430 1360 372 1400 332 1445 282 1468 226M1238 545C1275 490 1320 440 1370 378"/>
<path d="M1235 425L1320 440M1320 340L1385 372M1375 285L1430 300M1410 240L1470 255M1180 490L1275 500"/>
<!-- crossbar -->
<path d="M1150 80C1230 100 1280 110 1320 125L1425 160 1415 215C1340 190 1270 170 1235 155 1200 140 1180 130 1145 125Z" stroke-width="4.500"/>
<path d="M1150 90C1230 110 1280 120 1320 135L1422 170M1150 100C1230 120 1280 130 1318 145L1420 180M1148 110C1228 130 1278 142 1316 156L1418 192M1146 118C1226 140 1276 155 1312 168L1416 204M1220 98C1215 120 1215 140 1218 150M1290 115C1285 135 1285 160 1288 176M1350 135V192"/>
<circle cx="1120" cy="85" r="40" stroke-width="3.500"/><circle cx="1120" cy="85" r="35"/><circle cx="1120" cy="85" r="28"/><circle cx="1120" cy="85" r="20"/><circle cx="1110" cy="88" r="11" fill="#000070"/><path d="M1080 85H1160M1120 45V125M1092 57L1148 113M1148 57L1092 113"/>
<circle cx="1462" cy="197" r="40" stroke-width="3.500"/><circle cx="1462" cy="197" r="35"/><circle cx="1462" cy="197" r="28"/><circle cx="1462" cy="197" r="20"/><circle cx="1473" cy="208" r="11" fill="#000070"/><path d="M1422 197H1502M1462 157V237M1434 169L1490 225M1490 169L1434 225"/>
</g>
<use href="#leg" transform="matrix(.78 0 -.021 .846 900 343)"/>
<use href="#leg" transform="matrix(.95 0 .0256 .91 648 395)"/>
<use href="#leg" transform="matrix(.95 0 -.056 .917 1048 402)"/>
<use href="#leg" transform="matrix(1 0 0 1 782 467)"/>

<!-- axis gizmo -->
<path d="M72.500 887V875" stroke="#2030e0"/><path d="M72 887L84 884" stroke="#e01010"/><path d="M72 887L64 884" stroke="#10d030"/>
<text x="69" y="870" style="font-size:12px;font-weight:bold;fill:#1414e8">z</text><text x="59" y="881" style="font-size:14px;font-weight:bold;fill:#14e014">y</text><text x="81" y="880" style="font-size:12px;font-weight:bold;fill:#e81414">x</text>
<text x="844" y="903" textLength="31" style="font-size:11px;fill:#0d5a26">persp</text>

<!-- timeline -->
<path d="M5 918V948M5 957V975M5 983V1008M5 1016V1036" stroke="#666" stroke-width="4" stroke-dasharray="1.500 3"/>
<path d="M0 913.500H1690M0 950.500H1920M0 979.500H1920M0 1011.500H1920" stroke="#333"/>
<rect x="13" y="918" width="1606" height="30" fill="#6e6e6e"/><rect x="13" y="918" width="10" height="30" fill="#8a8a8a"/>
<path d="M13.500 948V918H1619V948" fill="none" stroke="#3a3a3a"/><path d="M13 948.500H1619" stroke="#515151"/>
<path d="M22 933V947M88 933V947M154 933V947M220.500 933V947M286.500 933V947M352.500 933V947M418.500 933V947M485 933V947M551 933V947M617 933V947M683 933V947M749 933V947M815 933V947M881 933V947M947.500 933V947M1013.500 933V947M1079.500 933V947M1146 933V947M1212 933V947M1278 933V947M1344 933V947M1410 933V947M1476 933V947M1542 933V947" stroke="#0c0c0c" stroke-width="1.300"/>
<g text-anchor="middle" style="font-size:10.500px"><text x="38" y="928" style="fill:#111">1</text><text x="104" y="928" style="fill:#111">2</text><text x="170" y="928" style="fill:#111">3</text><text x="236" y="928" style="fill:#111">4</text><text x="302" y="928" style="fill:#111">5</text><text x="368" y="928" style="fill:#111">6</text><text x="434" y="928" style="fill:#111">7</text><text x="501" y="928" style="fill:#111">8</text><text x="567" y="928" style="fill:#111">9</text><text x="637" y="928" style="fill:#111">10</text><text x="703" y="928" style="fill:#111">11</text><text x="769" y="928" style="fill:#111">12</text><text x="835" y="928" style="fill:#111">13</text><text x="901" y="928" style="fill:#111">14</text><text x="967" y="928" style="fill:#111">15</text><text x="1033" y="928" style="fill:#111">16</text><text x="1099" y="928" style="fill:#111">17</text><text x="1166" y="928" style="fill:#111">18</text><text x="1232" y="928" style="fill:#111">19</text><text x="1298" y="928" style="fill:#111">20</text><text x="1364" y="928" style="fill:#111">21</text><text x="1430" y="928" style="fill:#111">22</text><text x="1496" y="928" style="fill:#111">23</text><text x="1562" y="928" style="fill:#111">24</text></g>
<rect x="1622.500" y="923.500" width="68" height="19" rx="2" fill="#2d2d2d" stroke="#383838"/><text x="1626" y="937" style="fill:#b8c8d8">0.00</text>
<!-- playback -->
<g fill="#aaa" stroke="#222" stroke-width=".7">
<path d="M1700 929h2v12h-2zM1709 929l-6 6 6 6zM1716 929l-6 6 6 6z"/>
<path d="M1728 929h2v12h-2zM1742 929l-11 6 11 6z"/>
<path d="M1756 929h2v12h-2zM1770 929l-11 6 11 6z"/>
<path d="M1799 928l-12 7 12 7z"/>
<path d="M1813 928l12 7-12 7z"/>
<path d="M1840 929l11 6-11 6zM1852 929h2v12h-2z"/>
<path d="M1868 929l11 6-11 6zM1880 929h2v12h-2z"/>
<path d="M1894 929l6 6-6 6zM1901 929l6 6-6 6zM1908 929h2v12h-2z"/>
</g>
<path d="M1757.500 925V945M1852.500 925V945" stroke="#c01818"/>

<!-- range row -->
<rect x="13.500" y="957.500" width="69" height="18" rx="2" fill="#2d2d2d" stroke="#383838"/><text x="18" y="970" style="fill:#ccc">1.00</text>
<rect x="86.500" y="957.500" width="69" height="18" rx="2" fill="#2d2d2d" stroke="#383838"/><text x="90" y="970" style="fill:#ccc">1.00</text>
<rect x="158" y="956" width="1325" height="22" fill="#2b2b2b"/><rect x="165" y="959" width="655" height="18" fill="#646464"/><path d="M165 977.500H820" stroke="#999"/>
<path d="M172 963.500H179.500V975H172" fill="none" stroke="#aaa"/><path d="M809 963.500H816.500V975H809" fill="none" stroke="#aaa"/>
<text x="185" y="971" style="fill:#ddd">1</text><text x="790" y="971" style="fill:#ddd">24</text>
<rect x="1486.500" y="957.500" width="69" height="18" rx="2" fill="#2d2d2d" stroke="#383838"/><text x="1491" y="970" style="fill:#ccc">24.00</text>
<rect x="1559.500" y="957.500" width="67" height="18" rx="2" fill="#2d2d2d" stroke="#383838"/><text x="1563" y="970" style="fill:#ccc">48.00</text>
<path d="M1633 963H1642L1637.500 968Z" fill="none" stroke="#999"/>
<rect x="1650" y="957" width="100" height="18" rx="2" fill="#2d2d2d" stroke="#383838"/><text x="1653" y="970" style="fill:#b8c0c8;font-size:10.800px">No Anim Layer</text>
<path d="M1756 963H1765L1760.500 968Z" fill="none" stroke="#999"/>
<rect x="1773" y="957" width="100" height="18" rx="2" fill="#2d2d2d" stroke="#383838"/><text x="1776" y="970" style="fill:#b8c0c8;font-size:10.800px">No Character Set</text>
<circle cx="1881" cy="965.500" r="2.800" fill="none" stroke="#ccc"/><path d="M1884 965.500H1894M1890 965.500V968M1893 965.500V968" stroke="#ccc"/>
<rect x="1901" y="959" width="14" height="14" fill="#eee" stroke="#333"/><rect x="1901" y="959" width="14" height="3" fill="#5a9cd8"/><path d="M1903 970L1907 964 1910 970 1913 965M1903 967H1913M1906 963V972M1910 963V972" fill="none" stroke="#c03030"/>

<!-- command row -->
<text x="24" y="1000" style="fill:#c0c0c0">MEL</text>
<rect x="59" y="983" width="917" height="25" rx="2" fill="#2b2b2b" stroke="#3c3c3c"/>
<rect x="982" y="984" width="916" height="25" fill="#000" stroke="#2b2b2b"/>
<rect x="1901" y="989" width="14" height="14" fill="#c8c8c8" stroke="#222"/><rect x="1901" y="989" width="14" height="3" fill="#5a9cd8"/><path d="M1903 996H1913M1903 1000H1913" stroke="#222"/>

<!-- status -->
<rect x="13.500" y="1015.500" width="1904" height="21" fill="#444" stroke="#2b2b2b"/>
<text x="26" y="1030" textLength="125" style="font-size:10.300px;fill:#c8c8c8">Select Tool: select an object</text>
<path d="M1905 1036L1916 1025M1909 1036L1916 1029M1913 1036L1916 1033" stroke="#777"/>
<rect x="0" y="1038" width="1920" height="3" fill="#1e1e1e"/>

<!-- channel box / layers -->
<rect x="1694.500" y="700" width="201" height="212" fill="#444" stroke="#303030"/>
<path d="M1797 708V718" stroke="#c02020"/><path d="M1802 710L1812 713 1802 716 1812 719" fill="none" stroke="#ccc" stroke-width="1.500"/>
<path d="M1822 706V717" stroke="#c02020" stroke-width="2"/><path d="M1826 710L1836 713 1826 716 1836 719" fill="none" stroke="#ccc" stroke-width="1.500"/>
<path d="M1846 714L1857 708 1863 713 1852 719Z" fill="#ddd"/><path d="M1871 714L1880 708 1887 713 1877 719Z" fill="#ddd"/><path d="M1873 712L1880 708 1884 711 1877 714Z" fill="#3a78b8"/>
<rect x="1697.500" y="724" width="193" height="184" rx="2" fill="#2b2b2b" stroke="#3c3c3c"/>
<rect x="1700" y="726" width="189" height="20" fill="#7096bf"/>
<rect x="1703.500" y="729.500" width="19" height="13" rx="2.500" fill="#6b8fb5" stroke="#2b3d52"/><text x="1712.500" y="740" text-anchor="middle" style="fill:#162230">V</text>
<rect x="1726.500" y="729.500" width="19" height="13" rx="2.500" fill="#6b8fb5" stroke="#2b3d52"/>
<rect x="1749" y="729" width="16" height="14" fill="#2b2b2b"/><path d="M1749.500 743L1764.500 729.500V743" fill="none" stroke="#ddd"/><path d="M1750 743H1765" stroke="#ddd"/>
<text x="1768" y="740" style="font-size:10.700px;fill:#0c1a2c">Wooden_Serving_Trolley_</text>
<rect x="1700" y="892" width="14" height="14" rx="2" fill="#5e5e5e"/><path d="M1704 899l5-4v8z" fill="#ddd"/>
<rect x="1716" y="892" width="74" height="14" fill="#5e5e5e"/><path d="M1744 895H1762M1744 899H1762M1744 903H1762" stroke="#333" stroke-dasharray="1.500 2"/>
<rect x="1790" y="892" width="68" height="14" fill="#3c3c3c"/>
<rect x="1858" y="892" width="14" height="14" rx="2" fill="#5e5e5e"/><path d="M1862 899l5-4v8z" fill="#ddd"/>
<rect x="1874" y="892" width="14" height="14" rx="2" fill="#5e5e5e"/><path d="M1883 899l-5-4v8z" fill="#ddd"/>

<!-- outliner window -->
<rect x="1613" y="38" width="307" height="673" fill="#444" stroke="#565656"/>
<rect x="1613" y="39" width="307" height="30" fill="#fff"/>
<rect x="1623" y="46" width="12" height="15" fill="#2a2a2a"/><path d="M1626 58C1625 53 1627 49 1632 48 1630 52 1632 55 1630 59" fill="none" stroke="#ccc"/>
<text x="1642" y="58" textLength="43" style="font-size:11.500px;fill:#888">Outliner</text>
<path d="M1803 53.500H1813" stroke="#888"/><rect x="1848.500" y="48.500" width="9" height="9" fill="none" stroke="#888"/><path d="M1894 48L1904 58M1904 48L1894 58" stroke="#888"/>
<text x="1622" y="84">Display</text><text x="1672" y="84">Show</text><text x="1712" y="84">Help</text>
<path d="M1618 96h5v5h-5zM1629 96h5v5h-5zM1618 106h5v5h-5zM1629 106h5v5h-5z" fill="#555"/>
<rect x="1640" y="93" width="280" height="18" rx="2" fill="#2b2b2b"/>
<rect x="1616" y="117" width="287" height="568" fill="#2b2b2b"/>
<path d="M1615.500 116.500H1903.500V685.500H1615.500Z" fill="none" stroke="#383838"/>
<rect x="1905" y="117" width="15" height="15" rx="2" fill="#555" stroke="#2b2b2b"/><path d="M1908 127H1916L1912 122Z" fill="#ddd"/>
<rect x="1905" y="134" width="15" height="535" fill="#4a4a4a" stroke="#2b2b2b"/>
<rect x="1905" y="655" width="15" height="14" rx="2" fill="#555" stroke="#2b2b2b"/><path d="M1908 660H1916L1912 665Z" fill="#ddd"/>
<rect x="1905" y="670" width="15" height="14" rx="2" fill="#555" stroke="#2b2b2b"/><path d="M1908 675H1916L1912 680Z" fill="#ddd"/>
<rect x="1617" y="687" width="14" height="14" rx="2" fill="#4e4e4e" stroke="#2b2b2b"/><path d="M1621 694l5-4v8z" fill="#ddd"/>
<rect x="1633" y="687" width="237" height="14" fill="#4e4e4e" stroke="#2b2b2b"/><path d="M1744 690H1762M1744 694H1762M1744 698H1762" stroke="#333" stroke-dasharray="1.500 2"/>
<rect x="1873" y="687" width="14" height="14" rx="2" fill="#4e4e4e" stroke="#2b2b2b"/><path d="M1877 694l5-4v8z" fill="#ddd"/>
<rect x="1888" y="687" width="14" height="14" rx="2" fill="#4e4e4e" stroke="#2b2b2b"/><path d="M1897 694l-5-4v8z" fill="#ddd"/>
<path d="M1718 705.500H1815" stroke="#666" stroke-width="2" stroke-dasharray="2 2"/>
<use href="#pb" x="1623.500" y="127.500"/><path d="M1623.500 124V131" stroke="#2b2b2b" stroke-width="2"/>
<use href="#pb" x="1623.500" y="147.500"/><use href="#pb" x="1623.500" y="167.500"/><use href="#pb" x="1623.500" y="187.500"/><use href="#pb" x="1623.500" y="207.500"/>
<path d="M1664 134H1674L1677 121H1667Z" fill="#eee" stroke="#222"/><path d="M1660 128H1671" stroke="#c02020" stroke-width="1.500"/><path d="M1670 125L1674 128 1670 131Z" fill="#c02020"/>
<use href="#msh" x="1668" y="147"/><use href="#msh" x="1668" y="167"/><use href="#msh" x="1668" y="187"/><use href="#msh" x="1668" y="207"/><use href="#msh" x="1668" y="227"/>
<use href="#cam" x="1667" y="247"/><use href="#cam" x="1667" y="267"/><use href="#cam" x="1667" y="287"/><use href="#cam" x="1667" y="307"/>
<use href="#st" x="1668" y="327"/><use href="#st" x="1668" y="347"/>
<path d="M1681.500 131V227.500H1699M1681.500 147.500H1699M1681.500 167.500H1699M1681.500 187.500H1699M1681.500 207.500H1699" fill="none" stroke="#ccc"/>
<g fill="#2b2b2b" stroke="#ccc"><circle cx="1681.500" cy="127.500" r="2"/><circle cx="1701.500" cy="147.500" r="2"/><circle cx="1701.500" cy="167.500" r="2"/><circle cx="1701.500" cy="187.500" r="2"/><circle cx="1701.500" cy="207.500" r="2"/><circle cx="1701.500" cy="227.500" r="2"/></g>
<g style="font-size:10.700px">
<text x="1688" y="131" style="fill:#c8ccd2">Wooden_Serving_Trolley</text>
<text x="1708" y="151" style="fill:#c8ccd2">Mount_Back_Left</text>
<text x="1708" y="171" style="fill:#c8ccd2">Mount_Back_Right</text>
<text x="1708" y="191" style="fill:#c8ccd2">Mount_Front_Left</text>
<text x="1708" y="211" style="fill:#c8ccd2">Mount_Front_Right</text>
<text x="1708" y="231" style="fill:#c8ccd2">Table</text>
<text x="1688" y="251" style="fill:#666">persp</text>
<text x="1688" y="271" style="fill:#666">top</text>
<text x="1688" y="291" style="fill:#666">front</text>
<text x="1688" y="311" style="fill:#666">side</text>
<text x="1688" y="331" style="fill:#c8ccd2">defaultLightSet</text>
<text x="1688" y="351" style="fill:#c8ccd2">defaultObjectSet</text>
</g>
</svg>
</body></html>
